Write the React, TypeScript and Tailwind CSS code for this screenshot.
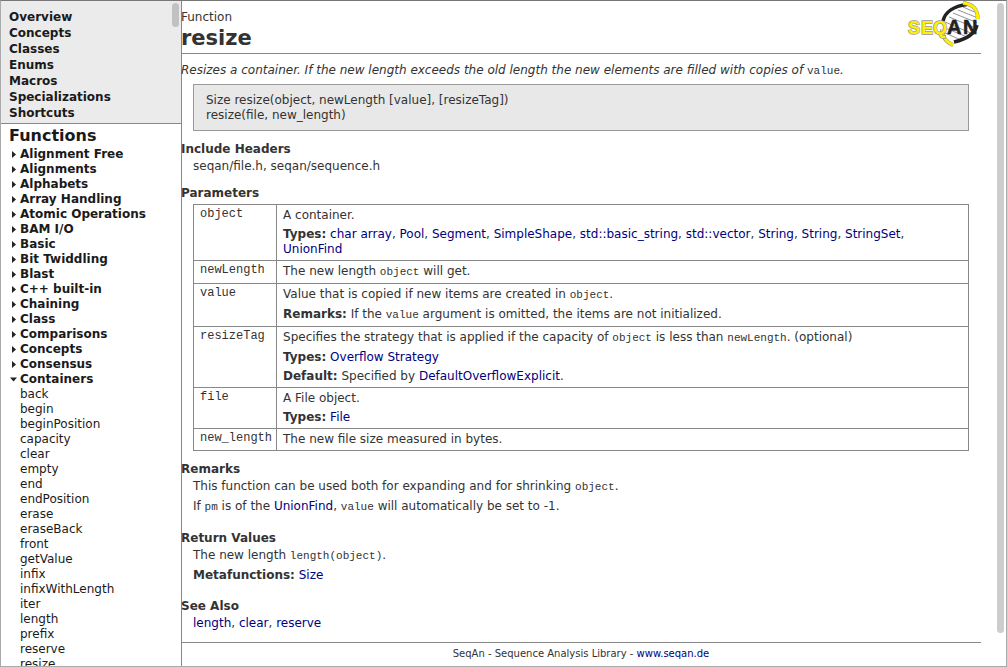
import React from "react";

const overview = ["Overview", "Concepts", "Classes", "Enums", "Macros", "Specializations", "Shortcuts"];
const groups = [
  "Alignment Free", "Alignments", "Alphabets", "Array Handling", "Atomic Operations", "BAM I/O", "Basic",
  "Bit Twiddling", "Blast", "C++ built-in", "Chaining", "Class", "Comparisons", "Concepts", "Consensus",
];
const containers = [
  "back", "begin", "beginPosition", "capacity", "clear", "empty", "end", "endPosition", "erase", "eraseBack",
  "front", "getValue", "infix", "infixWithLength", "iter", "length", "prefix", "reserve", "resize",
];
const objectTypes = [
  "char array", "Pool", "Segment", "SimpleShape", "std::basic_string", "std::vector", "String", "String",
  "StringSet", "UnionFind",
];

function Link({ children }: { children: React.ReactNode }) {
  return <a href="#" className="text-[#000080] hover:underline">{children}</a>;
}

function Code({ children }: { children: React.ReactNode }) {
  return <code className="font-['Liberation_Mono',monospace] text-[11px]">{children}</code>;
}

function LinkList({ items }: { items: string[] }) {
  return (
    <>
      {items.map((t, i) => (
        <React.Fragment key={i}>
          <Link>{t}</Link>
          {i < items.length - 1 ? ", " : ""}
        </React.Fragment>
      ))}
    </>
  );
}

function Arrow({ open }: { open?: boolean }) {
  return (
    <svg viewBox="0 0 8 8" className="h-2 w-2 shrink-0" fill="#222" aria-hidden="true">
      <path d={open ? "M1 1.5h7L4.5 5.5z" : "M3 0v7L7 3.5z"} />
    </svg>
  );
}

function Row({ name, children }: { name: string; children: React.ReactNode }) {
  return (
    <tr>
      <th scope="row" className="w-[83px] border border-[#888] pl-1.5 pr-1 pt-0.5 text-left align-top font-['Liberation_Mono',monospace] text-[12px] font-normal">
        {name}
      </th>
      <td className="border border-[#888] px-1.5 py-[3px] align-top">
        <div className="flex flex-col gap-1">{children}</div>
      </td>
    </tr>
  );
}

function Logo() {
  return (
    <svg viewBox="0 0 74 48" className="-mb-1 h-12 w-[74px]" role="img" aria-label="SeqAn">
      <clipPath id="helix">
        <path d="M35 26C37 13 47 5 61 4C70 9 72 17 69 25C65 34 57 39 46 41C38 38 35 32 35 26z" />
      </clipPath>
      <g clipPath="url(#helix)">
        <path d="M35 2h38v42H35z" fill="#fff" />
        <path d="M56 6L70 12M51 9L71 17M46 12L71 22M42 16L71 28M38 21L66 33M36 26L60 36M36 31L54 39" stroke="#777" strokeWidth="0.8" fill="none" />
      </g>
      <g fill="none">
        <path d="M36 20C38 11 47 5 60 3.5" stroke="#222" strokeWidth="3.5" />
        <path d="M70 24C68 33 60 38 47 41" stroke="#222" strokeWidth="3.5" />
        <path d="M56 2C66 3 71.5 9 70.500 18" stroke="#888" strokeWidth="3.8" />
        <path d="M56 2C66 3 71.5 9 70.500 18" stroke="#ffef00" strokeWidth="3" />
        <path d="M35 28C35 36 39 41 46 44" stroke="#888" strokeWidth="3.8" />
        <path d="M35 28C35 36 39 41 46 44" stroke="#ffef00" strokeWidth="3" />
      </g>
      <g fontFamily="Liberation Sans, sans-serif" fontWeight="bold">
        <g fill="#ffef00" stroke="#999" strokeWidth="1.4" paintOrder="stroke" fontSize="18">
          <text x="1" y="33">S</text>
          <text x="14" y="33">E</text>
          <text x="26" y="33">Q</text>
        </g>
        <g fill="#222" stroke="#222" strokeWidth="0.6" fontSize="20">
          <text x="40" y="33">A</text>
          <text x="56" y="33">N</text>
        </g>
      </g>
    </svg>
  );
}

export default function App() {
  return (
    <div className="flex h-screen overflow-hidden border border-[#aaa] border-t-[#777] bg-white font-['DejaVu_Sans',sans-serif] text-[12px] leading-[15px] text-[#333]">
      <nav className="flex w-[181px] shrink-0 flex-col overflow-hidden border-r border-[#888] text-[#1a1a1a]">
        <div className="flex shrink-0 justify-between border-b border-[#888] bg-[#ebebeb] pb-0.5 pl-2 pr-0.5">
          <ul className="pt-2 font-bold leading-4">
            {overview.map((t) => <li key={t}><a href="#">{t}</a></li>)}
          </ul>
          <div className="mt-0.5 h-6 w-[7px] rounded-full bg-[#c1c1c1]" />
        </div>
        <h2 className="pl-2 text-[16px] font-bold leading-[23px]">Functions</h2>
        <ul className="pl-2 font-bold">
          {groups.map((t) => (
            <li key={t}><a href="#" className="flex items-center gap-[3px]"><Arrow />{t}</a></li>
          ))}
          <li>
            <a href="#" className="flex items-center gap-[3px]"><Arrow open />Containers</a>
            <ul className="pl-[11px] font-normal">
              {containers.map((t) => <li key={t}><a href="#">{t}</a></li>)}
            </ul>
          </li>
        </ul>
      </nav>
      <main className="-ml-px min-w-0 flex-1 overflow-hidden">
        <header className="flex justify-between border-b border-[#888]">
          <div className="pb-0.5 pt-[9px]">
            <p>Function</p>
            <h1 className="text-[21px] font-bold leading-[26px]">resize</h1>
          </div>
          <Logo />
        </header>
        <p className="pt-[9px] italic">
          Resizes a container. If the new length exceeds the old length the new elements are filled with copies of{" "}
          <span className="not-italic"><Code>value</Code></span>.
        </p>
        <div className="mx-3 mt-[5px] border border-[#999] bg-[#e8e8e8] px-3 pb-[7px] pt-2">
          Size resize(object, newLength [value], [resizeTag])<br />
          resize(file, new_length)
        </div>
        <h2 className="mt-[11px] font-bold">Include Headers</h2>
        <p className="mx-3 mt-0.5">seqan/file.h, seqan/sequence.h</p>
        <h2 className="mt-3 font-bold">Parameters</h2>
        <div className="mx-3 mt-[3px]">
          <table className="w-full border-collapse">
            <tbody>
              <Row name="object"><p>A container.</p><p><b>Types:</b> <LinkList items={objectTypes} /></p></Row>
              <Row name="newLength"><p>The new length <Code>object</Code> will get.</p></Row>
              <Row name="value">
                <p>Value that is copied if new items are created in <Code>object</Code>.</p>
                <p><b>Remarks:</b> If the <Code>value</Code> argument is omitted, the items are not initialized.</p>
              </Row>
              <Row name="resizeTag">
                <p>Specifies the strategy that is applied if the capacity of <Code>object</Code> is less than <Code>newLength</Code>. (optional)</p>
                <p><b>Types:</b> <Link>Overflow Strategy</Link></p>
                <p><b>Default:</b> Specified by <Link>DefaultOverflowExplicit</Link>.</p>
              </Row>
              <Row name="file"><p>A File object.</p><p><b>Types:</b> <Link>File</Link></p></Row>
              <Row name="new_length"><p>The new file size measured in bytes.</p></Row>
            </tbody>
          </table>
        </div>
        <h2 className="mt-[11px] font-bold">Remarks</h2>
        <div className="mx-3 mt-0.5 flex flex-col gap-1">
          <p>This function can be used both for expanding and for shrinking <Code>object</Code>.</p>
          <p>If <Code>pm</Code> is of the <Link>UnionFind</Link>, <Code>value</Code> will automatically be set to -1.</p>
        </div>
        <h2 className="mt-4 font-bold">Return Values</h2>
        <div className="mx-3 mt-0.5 flex flex-col gap-1">
          <p>The new length <Code>length(object)</Code>.</p>
          <p><b>Metafunctions:</b> <Link>Size</Link></p>
        </div>
        <h2 className="mt-4 font-bold">See Also</h2>
        <p className="mx-3 mt-0.5"><LinkList items={["length", "clear", "reserve"]} /></p>
        <footer className="mt-[11px] border-t border-[#888] pt-[3px] text-center text-[10px]">
          SeqAn - Sequence Analysis Library - <Link>www.seqan.de</Link>
        </footer>
      </main>
      <div className="w-[25px] shrink-0 pl-4 pt-0.5">
        <div className="h-[95%] w-[7px] rounded-full bg-[#cdcdcd]" />
      </div>
    </div>
  );
}
